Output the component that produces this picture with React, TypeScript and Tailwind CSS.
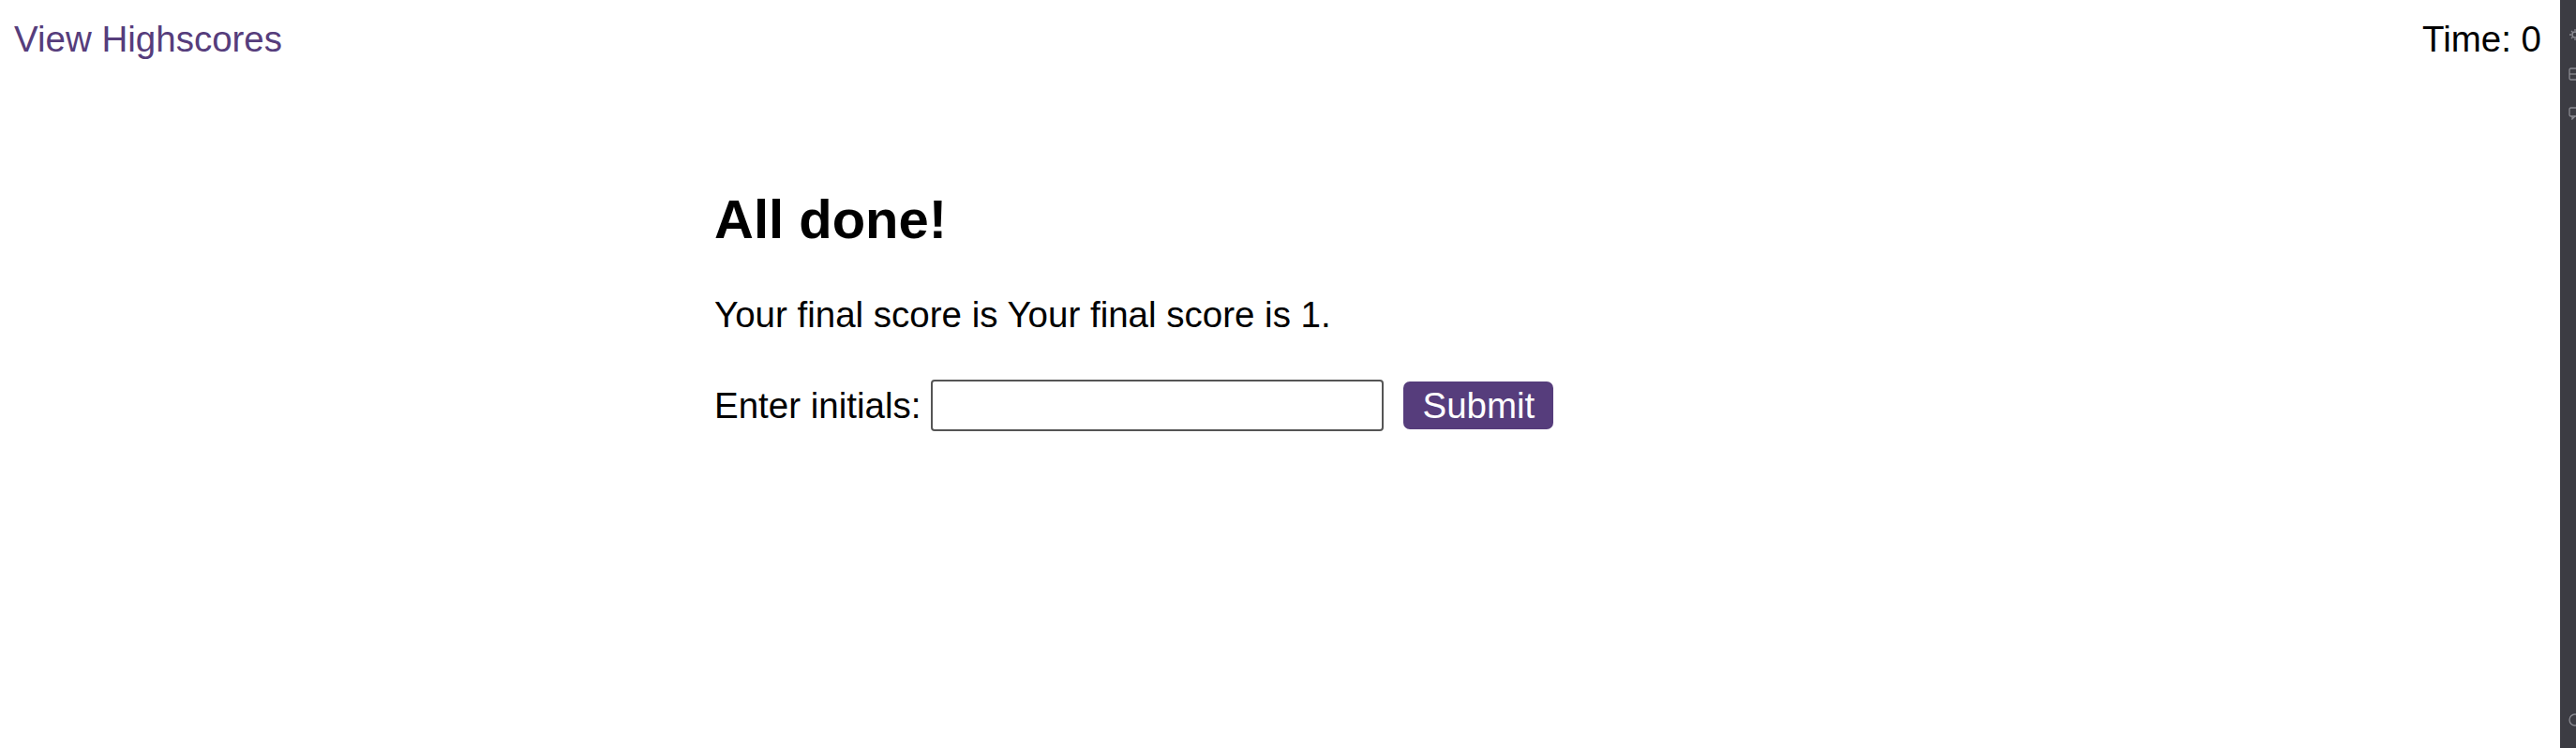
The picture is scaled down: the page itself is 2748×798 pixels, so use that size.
import React, { useState } from 'react';

function SideStrip() {
  return (
    <div className="w-[17px] shrink-0 bg-[#3c3c43] flex flex-col items-end overflow-hidden">
      <div className="flex flex-col gap-[28px] pt-[30px] pl-[9px] w-full">
        <svg width="12" height="14" viewBox="0 0 12 14" className="text-[#8b8b92]">
          <circle cx="7" cy="7" r="3" fill="none" stroke="currentColor" strokeWidth="1.5" />
          <path d="M7 1v2M7 11v2M1 7h2M11 7h2M3 3l1.5 1.5M3 11l1.5-1.5" stroke="currentColor" strokeWidth="1.3" />
        </svg>
        <svg width="12" height="14" viewBox="0 0 12 14" className="text-[#8b8b92]">
          <rect x="1" y="1" width="12" height="12" rx="1.5" fill="none" stroke="currentColor" strokeWidth="1.3" />
          <path d="M1 7h12" stroke="currentColor" strokeWidth="1.3" />
        </svg>
        <svg width="12" height="14" viewBox="0 0 12 14" className="text-[#8b8b92]">
          <rect x="1" y="1" width="12" height="9" rx="1.5" fill="none" stroke="currentColor" strokeWidth="1.3" />
          <path d="M4 10v3l3-3" fill="none" stroke="currentColor" strokeWidth="1.3" />
        </svg>
      </div>
      <div className="mt-auto mb-[22px] pl-[8px] w-full">
        <svg width="12" height="16" viewBox="0 0 12 16" className="text-[#8b8b92]">
          <circle cx="8" cy="8" r="6" fill="none" stroke="currentColor" strokeWidth="1.3" />
        </svg>
      </div>
    </div>
  );
}

export default function App() {
  const [initials, setInitials] = useState('');

  return (
    <div className="flex h-[798px] bg-white text-black font-['Liberation_Sans',Arial,sans-serif]">
      <div className="flex-1 flex flex-col">
        <header className="flex justify-between items-start pt-[20px] pl-[15px] pr-[20px] text-[38.5px] leading-[44px]">
          <a href="#" className="text-[#563d7c]">View Highscores</a>
          <span>Time: 0</span>
        </header>

        <main className="mx-auto w-[1207px] mt-[137px]">
          <h1 className="text-[58px] leading-[66px] font-bold">All done!</h1>
          <p className="mt-[47px] text-[38.5px] leading-[44px]">
            Your final score is Your final score is 1.
          </p>
          <form
            className="mt-[47px] flex items-center text-[38.5px] leading-[44px]"
            onSubmit={(e) => e.preventDefault()}
          >
            <label htmlFor="initials">Enter initials:</label>
            <input
              id="initials"
              type="text"
              value={initials}
              onChange={(e) => setInitials(e.target.value)}
              className="ml-[11px] w-[483px] h-[55px] border-2 border-[#555555] rounded-[4px] bg-white px-2 outline-none"
            />
            <button
              type="submit"
              className="ml-[21px] w-[160px] h-[51px] rounded-[7px] bg-[#563d7c] text-white text-[38.5px] leading-[44px] flex items-center justify-center"
            >
              Submit
            </button>
          </form>
        </main>
      </div>
      <SideStrip />
    </div>
  );
}
